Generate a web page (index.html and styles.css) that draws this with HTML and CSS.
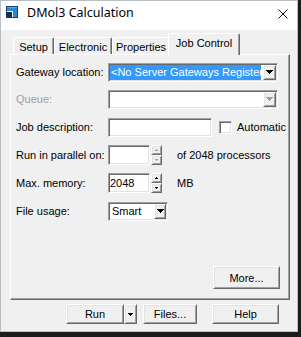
FILE: index.html
```html
<!DOCTYPE html>
<html>
<head>
<meta charset="utf-8">
<title>DMol3 Calculation</title>
<link rel="stylesheet" href="styles.css">
</head>
<body>
<div class="window">
  <div class="titlebar">
    <svg class="appicon" width="12" height="12" viewBox="0 0 12 12" shape-rendering="crispEdges">
      <rect x="0" y="0" width="12" height="12" fill="#173f6b"/>
      <rect x="1" y="1" width="10" height="10" fill="#2c86d8"/>
      <rect x="1" y="1" width="10" height="1" fill="#5aa6e8"/>
      <rect x="1" y="5" width="6" height="6" fill="#ffffff"/>
      <rect x="1" y="6" width="5" height="5" fill="#0f2b4d"/>
    </svg>
    <span class="title">DMol3 Calculation</span>
    <svg class="close" width="10" height="10" viewBox="0 0 10 10">
      <path d="M0.5 0.5 L9.5 9.5 M9.5 0.5 L0.5 9.5" stroke="#111" stroke-width="1" fill="none"/>
    </svg>
  </div>
  <div class="client">
    <div class="tabs">
      <div class="tab tab-setup">Setup</div>
      <div class="tab tab-elec">Electronic</div>
      <div class="tab tab-prop">Properties</div>
      <div class="tab tab-sel">Job Control</div>
    </div>
    <div class="panel">
      <div class="row row-first">
        <span class="lbl">Gateway location:</span>
        <div class="combo combo-wide sunken">
          <span class="hl">&lt;No Server Gateways Register</span>
          <span class="dd raised"><svg width="7" height="4" viewBox="0 0 7 4"><path d="M0 0h7v1H0z M1 1h5v1H1z M2 2h3v1H2z M3 3h1v1H3z" fill="#000"/></svg></span>
        </div>
      </div>
      <div class="row">
        <span class="lbl lbl-dis">Queue:</span>
        <div class="combo combo-wide sunken">
          <span class="combo-fill"></span>
          <span class="dd raised"><svg width="7" height="4" viewBox="0 0 7 4"><path d="M0 0h7v1H0z M1 1h5v1H1z M2 2h3v1H2z M3 3h1v1H3z" fill="#a0a0a0"/></svg></span>
        </div>
      </div>
      <div class="row">
        <span class="lbl">Job description:</span>
        <div class="tb tb-desc sunken"></div>
        <span class="chk sunken"></span>
        <span class="chk-lbl">Automatic</span>
      </div>
      <div class="row">
        <span class="lbl">Run in parallel on:</span>
        <div class="tb tb-num sunken"></div>
        <div class="spin">
          <span class="spin-btn raised"><svg width="3" height="2" viewBox="0 0 3 2"><path d="M1 0h1v1H1z M0 1h3v1H0z" fill="#a0a0a0"/></svg></span>
          <span class="spin-btn raised"><svg width="3" height="2" viewBox="0 0 3 2"><path d="M0 0h3v1H0z M1 1h1v1H1z" fill="#a0a0a0"/></svg></span>
        </div>
        <span class="unit">of 2048 processors</span>
      </div>
      <div class="row">
        <span class="lbl">Max. memory:</span>
        <div class="tb tb-num sunken"><span class="tb-text">2048</span></div>
        <div class="spin">
          <span class="spin-btn raised"><svg width="3" height="2" viewBox="0 0 3 2"><path d="M1 0h1v1H1z M0 1h3v1H0z" fill="#000"/></svg></span>
          <span class="spin-btn raised"><svg width="3" height="2" viewBox="0 0 3 2"><path d="M0 0h3v1H0z M1 1h1v1H1z" fill="#000"/></svg></span>
        </div>
        <span class="unit">MB</span>
      </div>
      <div class="row">
        <span class="lbl">File usage:</span>
        <div class="combo combo-small sunken">
          <span class="combo-val">Smart</span>
          <span class="dd dd-small raised"><svg width="7" height="4" viewBox="0 0 7 4"><path d="M0 0h7v1H0z M1 1h5v1H1z M2 2h3v1H2z M3 3h1v1H3z" fill="#000"/></svg></span>
        </div>
      </div>
      <div class="more-row">
        <div class="btn raised btn-more">More...</div>
      </div>
    </div>
    <div class="footer">
      <div class="btn raised btn-run">Run</div>
      <div class="btn raised btn-arrow"><svg width="5" height="3" viewBox="0 0 5 3"><path d="M0 0h5v1H0z M1 1h3v1H1z M2 2h1v1H2z" fill="#000"/></svg></div>
      <div class="btn raised btn-files">Files...</div>
      <div class="btn raised btn-help">Help</div>
    </div>
  </div>
</div>
</body>
</html>
```

FILE: styles.css
```css
* {
  box-sizing: border-box;
}

body {
  margin: 0;
  background: #1c1c1c;
  font-family: "Liberation Sans", Arial, sans-serif;
  font-size: 11px;
  color: #000;
}

.window {
  width: 298px;
  height: 332px;
  border: 1px solid #b7bfc7;
  background: #f0f0f0;
  display: flex;
  flex-direction: column;
}

.titlebar {
  height: 29px;
  flex: none;
  background: #fff;
  display: flex;
  align-items: flex-start;
  padding: 4px 0 0 5px;
}

.appicon {
  flex: none;
  margin-top: 1px;
}

.title {
  font-family: "Noto Sans", sans-serif;
  font-size: 12.5px;
  line-height: 16px;
  margin-left: 9px;
  color: #000;
}

.close {
  flex: none;
  margin: 4px 9px 0 auto;
}

.client {
  flex: 1;
  display: flex;
  flex-direction: column;
  padding: 3px 0 0 9px;
}

.tabs {
  display: flex;
  align-items: flex-end;
  height: 21px;
  padding-left: 3px;
}

.tab {
  height: 17px;
  display: flex;
  align-items: center;
  justify-content: center;
  border-top: 1px solid #fff;
  border-left: 1px solid #fff;
  border-right: 1px solid #696969;
  box-shadow: inset -1px 0 #a0a0a0;
  border-radius: 2px 2px 0 0;
  padding-top: 1px;
  background: #f0f0f0;
}

.tab-setup { width: 41px; }
.tab-elec { width: 58px; }
.tab-prop { width: 58px; }

.tab-sel {
  width: 72px;
  height: 22px;
  margin: 0 -2px -1px -2px;
  position: relative;
  z-index: 1;
  padding: 0 0 4px 0;
}

.panel {
  width: 280px;
  height: 246px;
  border-top: 1px solid #fff;
  border-left: 1px solid #fff;
  border-right: 1px solid #696969;
  border-bottom: 1px solid #696969;
  box-shadow: inset -1px -1px #a0a0a0;
  display: flex;
  flex-direction: column;
  padding: 4px 0 0 5px;
}

.row {
  display: flex;
  align-items: center;
  height: 28px;
  flex: none;
}

.row-first {
  height: 26px;
}

.lbl {
  width: 92px;
  flex: none;
}

.lbl-dis {
  color: #a0a0a0;
}

.sunken {
  border: 1px solid;
  border-color: #a0a0a0 #fff #fff #a0a0a0;
  box-shadow: inset 1px 1px #696969, inset -1px -1px #e3e3e3;
  background: #fff;
}

.raised {
  background: #f0f0f0;
  border: 1px solid;
  border-color: #fff #696969 #696969 #fff;
  box-shadow: inset 1px 1px #e3e3e3, inset -1px -1px #a0a0a0;
}

.combo {
  height: 19px;
  display: flex;
  align-items: stretch;
  padding: 1px;
  flex: none;
}

.combo-wide { width: 170px; }
.combo-small { width: 60px; }

.hl {
  flex: 1;
  min-width: 0;
  background: #3399ff;
  color: #fff;
  margin-right: 2px;
  overflow: hidden;
  white-space: nowrap;
  line-height: 15px;
  padding-left: 1px;
}

.combo-fill {
  flex: 1;
}

.combo-val {
  flex: 1;
  line-height: 15px;
  padding-left: 2px;
}

.dd {
  width: 13px;
  flex: none;
  display: flex;
  align-items: center;
  justify-content: center;
}

.dd-small {
  width: 12px;
}

.tb {
  flex: none;
  height: 19px;
}

.tb-desc {
  width: 104px;
}

.tb-num {
  width: 42px;
  height: 20px;
  display: flex;
  align-items: center;
  padding-left: 1px;
}

.spin {
  display: flex;
  flex-direction: column;
  width: 11px;
  height: 20px;
  margin-left: 1px;
  flex: none;
}

.spin-btn {
  flex: 1;
  display: flex;
  align-items: center;
  justify-content: center;
}

.unit {
  margin-left: 15px;
}

.chk {
  width: 13px;
  height: 13px;
  margin-left: 7px;
  flex: none;
}

.chk-lbl {
  margin-left: 5px;
}

.more-row {
  margin-top: auto;
  display: flex;
  justify-content: flex-end;
  padding: 0 9px 10px 0;
}

.btn {
  display: flex;
  align-items: center;
  justify-content: center;
  flex: none;
}

.btn-more {
  width: 67px;
  height: 23px;
}

.footer {
  display: flex;
  margin-top: 4px;
  padding-left: 56px;
  height: 20px;
}

.btn-run { width: 58px; height: 20px; }
.btn-arrow { width: 13px; height: 20px; }
.btn-files { width: 54px; height: 20px; margin-left: 6px; }
.btn-help { width: 67px; height: 20px; margin-left: 15px; }
```
